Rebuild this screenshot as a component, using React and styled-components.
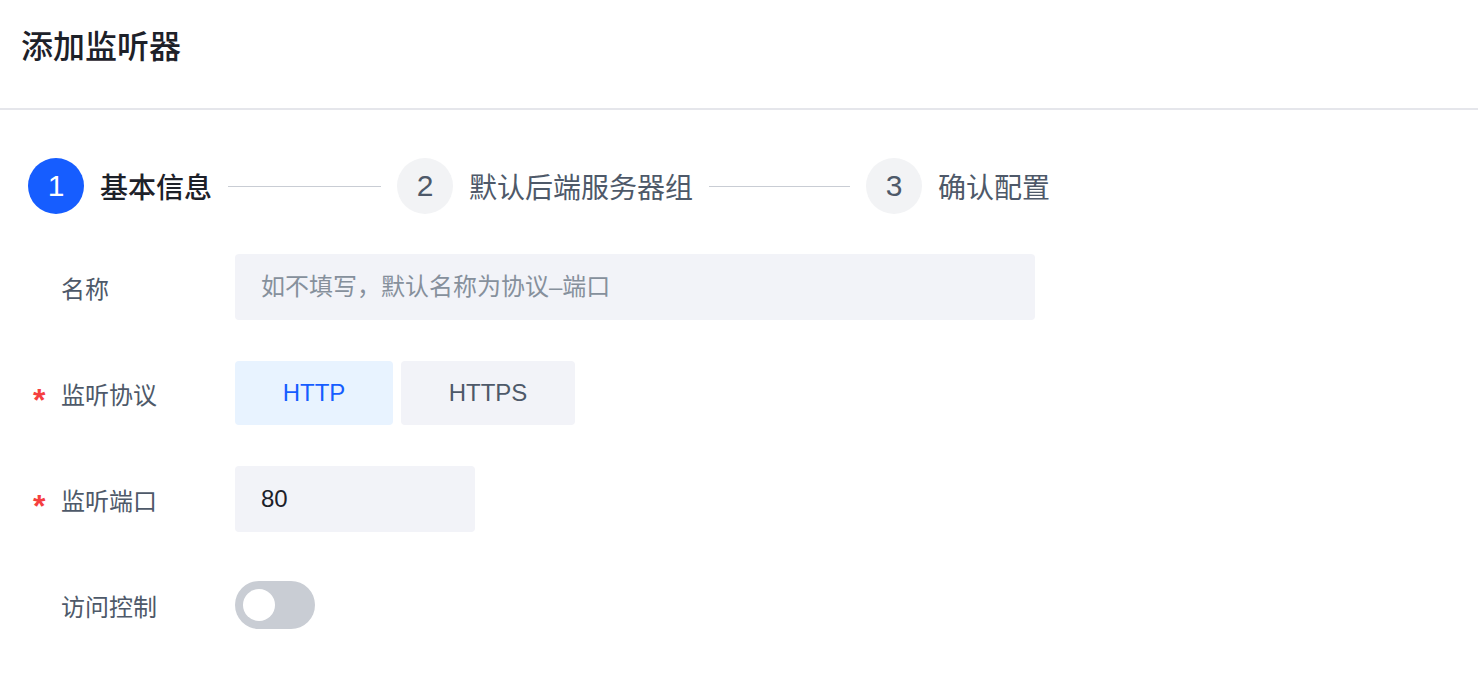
import React from 'react'
import styled, { createGlobalStyle } from 'styled-components'

const GlobalStyle = createGlobalStyle`
  body {
    margin: 0;
    background: #ffffff;
    font-family: "Liberation Sans", "Noto Sans CJK SC", sans-serif;
  }
`

const Page = styled.div`
  width: 100%;
  min-height: 690px;
  background: #ffffff;
`

const Header = styled.div`
  height: 110px;
  padding-left: 21px;
  display: flex;
  align-items: center;
  padding-bottom: 20px;
  box-sizing: border-box;
  border-bottom: 2px solid #e5e6eb;
`

const Title = styled.h1`
  margin: 0;
  font-size: 32px;
  font-weight: 500;
  color: #1d2129;
`

const Steps = styled.div`
  display: flex;
  align-items: center;
  padding: 0 28px;
  margin-top: 48px;
`

const Step = styled.div`
  display: flex;
  align-items: center;
  gap: 16px;
`

const Circle = styled.div`
  width: 56px;
  height: 56px;
  border-radius: 50%;
  display: flex;
  align-items: center;
  justify-content: center;
  font-size: 30px;
  background: ${p => (p.$active ? '#165dff' : '#f2f3f5')};
  color: ${p => (p.$active ? '#ffffff' : '#4e5969')};
`

const StepLabel = styled.span`
  font-size: 28px;
  font-weight: ${p => (p.$active ? 500 : 400)};
  color: ${p => (p.$active ? '#1d2129' : '#4e5969')};
`

const Connector = styled.div`
  width: ${p => p.$width}px;
  height: 1px;
  margin: 0 16px;
  background: #c9cdd4;
`

const Form = styled.div`
  padding: 0 28px;
  margin-top: 40px;
`

const Row = styled.div`
  display: flex;
  align-items: center;
  min-height: 66px;
  margin-bottom: 40px;
`

const Label = styled.div`
  width: 207px;
  display: flex;
  align-items: center;
  font-size: 24px;
  color: #4e5969;
`

const Required = styled.span`
  width: 33px;
  height: 24px;
  padding-left: 5px;
  box-sizing: border-box;
  color: #f53f3f;
  font-size: 32px;
  font-weight: 700;
  line-height: 1;
  padding-top: 3px;
  overflow: visible;
`

const Input = styled.input`
  width: ${p => p.$width}px;
  height: 66px;
  box-sizing: border-box;
  border: none;
  outline: none;
  border-radius: 4px;
  background: #f2f3f8;
  padding: 0 26px;
  font-family: inherit;
  font-size: 24px;
  color: #1d2129;
  &::placeholder {
    color: #86909c;
  }
`

const Segmented = styled.div`
  display: flex;
  gap: 8px;
`

const SegButton = styled.button`
  width: ${p => p.$width}px;
  height: 64px;
  border: none;
  border-radius: 4px;
  font-family: inherit;
  font-size: 24px;
  background: ${p => (p.$active ? '#e8f3ff' : '#f2f3f8')};
  color: ${p => (p.$active ? '#165dff' : '#4e5969')};
  cursor: pointer;
`

const Switch = styled.div`
  width: 80px;
  height: 48px;
  border-radius: 24px;
  background: #c9cdd4;
  padding: 8px;
  box-sizing: border-box;
  display: flex;
  align-items: center;
`

const Knob = styled.div`
  width: 32px;
  height: 32px;
  border-radius: 50%;
  background: #ffffff;
`

const steps = [
  { no: 1, label: '基本信息', line: 153 },
  { no: 2, label: '默认后端服务器组', line: 141 },
  { no: 3, label: '确认配置' },
]

const FormLabel = ({ required, children }) => (
  <Label>
    <Required>{required ? '*' : ''}</Required>
    {children}
  </Label>
)

const App = () => {
  const [protocol, setProtocol] = React.useState('HTTP')

  return (
    <Page>
      <GlobalStyle />
      <Header>
        <Title>添加监听器</Title>
      </Header>

      <Steps>
        {steps.map((s, i) => (
          <React.Fragment key={s.no}>
            <Step>
              <Circle $active={i === 0}>{s.no}</Circle>
              <StepLabel $active={i === 0}>{s.label}</StepLabel>
            </Step>
            {s.line && <Connector $width={s.line} />}
          </React.Fragment>
        ))}
      </Steps>

      <Form>
        <Row>
          <FormLabel>名称</FormLabel>
          <Input $width={800} placeholder="如不填写，默认名称为协议–端口" />
        </Row>
        <Row>
          <FormLabel required>监听协议</FormLabel>
          <Segmented>
            <SegButton $width={158} $active={protocol === 'HTTP'} onClick={() => setProtocol('HTTP')}>
              HTTP
            </SegButton>
            <SegButton $width={174} $active={protocol === 'HTTPS'} onClick={() => setProtocol('HTTPS')}>
              HTTPS
            </SegButton>
          </Segmented>
        </Row>
        <Row>
          <FormLabel required>监听端口</FormLabel>
          <Input $width={240} defaultValue="80" />
        </Row>
        <Row>
          <FormLabel>访问控制</FormLabel>
          <Switch>
            <Knob />
          </Switch>
        </Row>
      </Form>
    </Page>
  )
}

export default App
